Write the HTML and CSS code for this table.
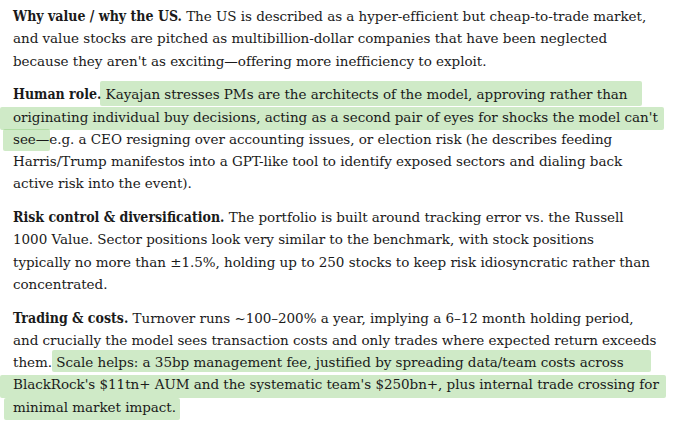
FILE: index.html
```html
<!DOCTYPE html>
<html>
<head>
<meta charset="utf-8">
<link rel="stylesheet" href="styles.css">
</head>
<body>
<main class="article">
  <p class="para"><b class="lead">Why value / why the US.</b> The US is described as a hyper-efficient but cheap-to-trade market,<br>and value stocks are pitched as multibillion-dollar companies that have been neglected<br>because they aren't as exciting—offering more inefficiency to exploit.</p>
  <p class="para"><b class="lead">Human role.</b> <span class="hl hl-a">Kayajan stresses PMs are the architects of the model, approving rather than</span><br><span class="hl hl-b">originating individual buy decisions, acting as a second pair of eyes for shocks the model can't</span><br><span class="hl hl-c">see—</span>e.g. a CEO resigning over accounting issues, or election risk (he describes feeding<br>Harris/Trump manifestos into a GPT-like tool to identify exposed sectors and dialing back<br>active risk into the event).</p>
  <p class="para"><b class="lead">Risk control &amp; diversification.</b> The portfolio is built around tracking error vs. the Russell<br>1000 Value. Sector positions look very similar to the benchmark, with stock positions<br>typically no more than ±1.5%, holding up to 250 stocks to keep risk idiosyncratic rather than<br>concentrated.</p>
  <p class="para"><b class="lead">Trading &amp; costs.</b> Turnover runs ~100–200% a year, implying a 6–12 month holding period,<br>and crucially the model sees transaction costs and only trades where expected return exceeds<br>them. <span class="hl hl-d">Scale helps: a 35bp management fee, justified by spreading data/team costs across</span><br><span class="hl hl-e">BlackRock's $11tn+ AUM and the systematic team's $250bn+, plus internal trade crossing for</span><br><span class="hl hl-f">minimal market impact.</span></p>
</main>
</body>
</html>
```
FILE: styles.css
```css
html, body {
  margin: 0;
  padding: 0;
  background: #ffffff;
}
.article {
  padding: 5px 0 0 13px;
  font-family: "DejaVu Serif", "Liberation Serif", serif;
  font-size: 13.5px;
  letter-spacing: -0.04px;
  line-height: 22.25px;
  color: #1a1a1a;
  white-space: nowrap;
}
.para {
  margin: 0 0 11.5px 0;
}
.lead {
  font-family: "DejaVu Serif Condensed", "DejaVu Serif", serif;
  font-stretch: condensed;
  font-size: 14px;
  font-weight: bold;
  letter-spacing: 0;
}
.hl {
  background: rgba(128, 200, 108, 0.38);
  padding-top: 4px;
  padding-bottom: 4px;
  border-radius: 2px;
}
.hl-a { padding-left: 6px; margin-left: -6px; padding-right: 15px; margin-right: -15px; padding-top: 5px; }
.hl-b { padding-left: 13px; margin-left: -13px; padding-right: 6px; margin-right: -6px; padding-top: 2px; padding-bottom: 5px; }
.hl-c { padding-left: 10px; margin-left: -10px; padding-right: 1px; margin-right: -1px; padding-top: 2px; padding-bottom: 4px; }
.hl-d { padding-left: 4px; margin-left: -4px; padding-right: 27px; margin-right: -27px; padding-top: 4px; padding-bottom: 2px; }
.hl-e { padding-left: 13px; margin-left: -13px; padding-right: 7px; margin-right: -7px; padding-top: 1px; padding-bottom: 6px; }
.hl-f { padding-left: 9px; margin-left: -9px; padding-right: 4px; margin-right: -4px; padding-top: 1px; padding-bottom: 5px; }
```
